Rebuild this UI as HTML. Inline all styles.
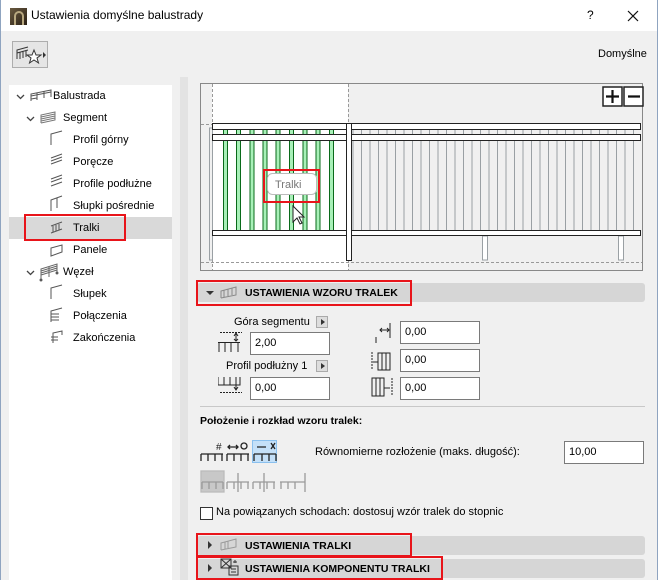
<!DOCTYPE html>
<html><head><meta charset="utf-8"><style>
*{box-sizing:border-box;margin:0;padding:0}
body{width:658px;height:580px;overflow:hidden;background:#f0f0f0;font-family:"Liberation Sans","DejaVu Sans",sans-serif;font-size:11px;color:#000;position:relative}
.a{position:absolute}
.t{position:absolute;white-space:nowrap;font-size:11px}
.inp{position:absolute;background:#fff;border:1px solid #7a7a7a;height:23px;padding:4px 0 0 4px;font-size:11px}
.bar{position:absolute;left:197px;width:448px;height:19px;background:#d6d6d6;border-radius:3px}
.bar b{position:absolute;left:48px;top:4px;font-size:10.5px}
.red{position:absolute;border:2px solid #e8141a}
.tri{position:absolute;width:0;height:0}
.ab{position:absolute;width:12px;height:12px;background:#ddd;border:1px solid #aaa}
.ab:after{content:"";position:absolute;left:4px;top:2px;border-left:4px solid #333;border-top:3.5px solid transparent;border-bottom:3.5px solid transparent}
</style></head><body>
<!-- title bar -->
<div class="a" style="left:0;top:0;width:658px;height:31px;background:#fff"></div>
<div class="a" style="left:10px;top:8px;width:17px;height:17px;background:linear-gradient(135deg,#6a5a40,#2a2015)"></div>
<div class="a" style="left:14px;top:11px;width:10px;height:14px;border:2px solid #b8a880;border-bottom:none;border-radius:8px 8px 0 0"></div>
<div class="t" style="left:31px;top:8px;font-size:12px">Ustawienia domyślne balustrady</div>
<div class="t" style="left:587px;top:8px;font-size:12px">?</div>
<svg class="a" style="left:627px;top:10px" width="12" height="12" stroke="#111" stroke-width="1.2"><path d="M1 1L11 11M11 1L1 11"/></svg>
<div class="a" style="left:0;top:0;width:1px;height:580px;background:#8fa4c0"></div>
<div class="a" style="right:0;top:0;width:1px;height:580px;background:#8fa4c0"></div>
<!-- toolbar -->
<div class="a" style="left:12px;top:41px;width:36px;height:27px;border:1px solid #adadad;background:#e5e5e5"></div>
<svg class="a" style="left:15px;top:44px" width="32" height="22" fill="none" stroke="#333">
<path d="M2 15V6L13 3M2 9L13 6M5 8V15M8 7V14M11 6V13"/>
<path d="M19 6L21 11H26L22 14L23.5 19L19 16L14.5 19L16 14L12 11H17Z" fill="#fff"/>
<path d="M28 8L31 11L28 14Z" fill="#333" stroke="none"/>
</svg>
<div class="t" style="left:598px;top:48px;font-size:11px">Domyślne</div>
<!-- tree -->
<div class="a" style="left:9px;top:85px;width:163px;height:495px;background:#fff"></div>
<div class="a" style="left:180px;top:77px;width:8px;height:503px;background:#e3e3e3"></div>
<div class="a" style="left:9px;top:217px;width:163px;height:22px;background:#d9d9d9"></div>
<div class="red" style="left:24px;top:214px;width:102px;height:27px"></div>
<svg class="a" style="left:14px;top:88px" width="40" height="190" fill="none" stroke="#444" stroke-width="1.3">
<path d="M3 7L6.5 10.5L10 7"/><path d="M13 29L16.5 32.5L20 29"/><path d="M13 183L16.5 186.5L20 183"/>
</svg>
<svg class="a" style="left:30px;top:88px" width="25" height="16" fill="none" stroke="#555"><path d="M1 13V6L21 2V9M1 8L21 4M7 12V5M14 10V3M7 10L1 11M14 9"/></svg>
<svg class="a" style="left:40px;top:110px" width="18" height="16" fill="none" stroke="#777"><path d="M1 13V5L15 2V10L1 13M1 7L15 4M1 9L15 6M1 11L15 8"/></svg>
<svg class="a" style="left:38px;top:262px" width="22" height="20" fill="none" stroke="#666"><path d="M3 18V7L19 2V10M3 9L19 4M3 11L19 6M3 13L19 8M11 5V15"/><circle cx="3" cy="18" r="1" fill="#222"/><circle cx="19" cy="11" r="1" fill="#222"/></svg>
<div class="t" style="left:53px;top:90px">Balustrada</div>
<div class="t" style="left:63px;top:112px">Segment</div>
<div class="t" style="left:73px;top:134px">Profil górny</div>
<div class="t" style="left:73px;top:156px">Poręcze</div>
<div class="t" style="left:73px;top:178px">Profile podłużne</div>
<div class="t" style="left:73px;top:200px">Słupki pośrednie</div>
<div class="t" style="left:73px;top:222px">Tralki</div>
<div class="t" style="left:73px;top:244px">Panele</div>
<div class="t" style="left:63px;top:266px">Węzeł</div>
<div class="t" style="left:73px;top:288px">Słupek</div>
<div class="t" style="left:73px;top:310px">Połączenia</div>
<div class="t" style="left:73px;top:332px">Zakończenia</div>
<svg class="a" style="left:40px;top:130px" width="30" height="220" fill="none" stroke="#555" stroke-width="1">
<path d="M11 15V4L22 1"/>
<path d="M11 34L22 30M11 31L22 27M11 28L22 24"/>
<path d="M11 56L22 52M11 52L22 48M11 49L22 45"/>
<path d="M11 81V70L22 66M17 78V68"/>
<path d="M11 103L22 99M11 96L22 92M13 102V96M16 101V95M19 100V94"/>
<path d="M11 126V118L22 115V122Z"/>
<path d="M11 169V158L22 155"/>
<path d="M11 192V181L22 178M11 184H19M11 187H19M11 190H19"/>
<path d="M13 213V203L22 201V205M11 207H18M11 210H18"/>
</svg>
<!-- preview -->
<svg class="a" style="left:200px;top:83px" width="444" height="189">
<rect x="0.5" y="0.5" width="442" height="187" fill="#f0f0f0" stroke="#888"/>
<rect x="12" y="1" width="136" height="186" fill="#fff"/>
<g stroke="#999" stroke-dasharray="3 2"><path d="M12.5 1V187M148.5 1V187M1 179.5H442M1 41.5H12"/></g>
<rect x="403" y="4" width="19" height="19" fill="#fff" stroke="#222" stroke-width="1.5"/>
<rect x="424" y="4" width="19" height="19" fill="#fff" stroke="#222" stroke-width="1.5"/>
<path d="M412.5 7V20M406 13.5H419M428 13.5H440" stroke="#111" stroke-width="2.2"/>
<g fill="none" stroke="#9aa0a4">
<path d="M153 46V148M161.5 46V148M170 46V148M178.5 46V148M187 46V148M195.5 46V148M204 46V148M212.5 46V148M221 46V148M229.5 46V148M238 46V148M246.5 46V148M255 46V148M263.5 46V148M272 46V148M280.5 46V148M289 46V148M297.5 46V148M306 46V148M314.5 46V148M323 46V148M331.5 46V148M340 46V148M348.5 46V148M357 46V148M365.5 46V148M374 46V148M382.5 46V148M391 46V148M399.5 46V148M408 46V148M416.5 46V148M425 46V148M433.5 46V148"/>
<rect x="282.5" y="153" width="5" height="24" fill="#fff"/><rect x="418.5" y="153" width="5" height="24" fill="#fff"/><rect x="9.5" y="45" width="3" height="132"/>
</g>
<g fill="#a8f0b8" stroke="#0a6a1a" stroke-width="1">
<rect x="23.5" y="46" width="4" height="102"/><rect x="36.5" y="46" width="4" height="102"/><rect x="50" y="46" width="4" height="102"/><rect x="63" y="46" width="4" height="102"/><rect x="76" y="46" width="4" height="102"/><rect x="89.5" y="46" width="4" height="102"/><rect x="103" y="46" width="4" height="102"/><rect x="116" y="46" width="4" height="102"/><rect x="129.5" y="46" width="4" height="102"/>
</g>
<g fill="#fff" stroke="#222">
<rect x="12.5" y="40.5" width="428" height="6"/><rect x="12.5" y="51.5" width="428" height="6"/><rect x="12.5" y="147.5" width="428" height="5"/><rect x="146.5" y="40.5" width="5" height="137"/>
</g>
<rect x="67.5" y="90.5" width="49" height="21" rx="5" fill="#fff" stroke="#bbb"/>
<text x="75" y="105" font-family="Liberation Sans" font-size="11" fill="#777">Tralki</text>
<path d="M93 123L93 139L97 135L100 141L102 140L99 134L104 134Z" fill="#fff" stroke="#222"/>
</svg>
<div class="red" style="left:263px;top:169px;width:57px;height:34px"></div>
<!-- section 1 -->
<div class="bar" style="top:283px"><b>USTAWIENIA WZORU TRALEK</b></div>
<div class="tri" style="left:206px;top:291px;border-top:4px solid #333;border-left:4px solid transparent;border-right:4px solid transparent"></div>
<svg class="a" style="left:220px;top:285px" width="18" height="15" fill="none" stroke="#888"><path d="M1 13V6L16 2V10L1 13M4 12V5M8 11V4M12 10V3"/></svg>
<div class="red" style="left:196px;top:280px;width:216px;height:26px"></div>
<div class="t" style="left:234px;top:316px">Góra segmentu</div>
<div class="ab" style="left:316px;top:316px"></div>
<div class="inp" style="left:250px;top:332px;width:80px">2,00</div>
<div class="t" style="left:226px;top:360px">Profil podłużny 1</div>
<div class="ab" style="left:316px;top:360px"></div>
<div class="inp" style="left:250px;top:377px;width:80px">0,00</div>
<svg class="a" style="left:218px;top:330px" width="30" height="70" fill="none" stroke="#222">
<path d="M2 2.5H24" stroke-dasharray="2 1"/><path d="M0 12.5H22M1 12V22M7 12V22M13 12V22M20 12V22M18 4V11M16 6L18 3L20 6M16 9L18 11L20 9"/>
<path d="M0 47V55H22V47M6 47V55M12 47V55M18 47V55M18 55V60M16 57L18 60L20 57"/><path d="M2 62.5H24" stroke-dasharray="2 1"/>
</svg>
<svg class="a" style="left:370px;top:320px" width="26" height="82" fill="none" stroke="#222">
<path d="M20 3V18M10 10H19M12 8L10 10L12 12M17 8L19 10L17 12M6 17V23"/>
<path d="M2 32V50" stroke-dasharray="2 1"/><path d="M8 33H20V50H8ZM12 33V50M16 33V50M3 42H8"/>
<path d="M2 58H14V76H2ZM6 58V76M10 58V76M14 68H20"/><path d="M22 58V76" stroke-dasharray="2 1"/>
</svg>
<div class="inp" style="left:400px;top:321px;width:80px">0,00</div>
<div class="inp" style="left:400px;top:349px;width:80px">0,00</div>
<div class="inp" style="left:400px;top:377px;width:80px">0,00</div>
<div class="a" style="left:200px;top:406px;width:445px;height:1px;background:#c8c8c8"></div>
<div class="t" style="left:200px;top:415px;font-weight:bold;font-size:10.5px">Położenie i rozkład wzoru tralek:</div>
<div class="a" style="left:252px;top:440px;width:25px;height:23px;background:#c4e0f8;border:1px solid #8ac0ee"></div>
<svg class="a" style="left:200px;top:440px" width="112" height="56" fill="none" stroke="#222" stroke-width="1.3">
<path d="M1 14H23M1 14V21M8 14V21M15 14V21M22 14V21M27 14H49M27 14V21M34 14V21M41 14V21M48 14V21M54 14H76M54 14V21M62 14V21M69 14V21M76 14V21"/>
<text x="16" y="10" font-size="10" fill="#222" stroke="none" font-family="Liberation Sans">#</text>
<path d="M28 7H38M30 5L28 7L30 9M36 5L38 7L36 9M57 7H66M71 3L75 9M75 3L71 9"/>
<circle cx="44" cy="6" r="3"/>
</svg>
<svg class="a" style="left:200px;top:470px" width="112" height="24" fill="none" stroke="#9a9a9a" stroke-width="1.3">
<rect x="1" y="1" width="23" height="21" fill="#c8c8c8" stroke="#bbb"/>
<path d="M2 12H23M2 12V19M9 12V19M16 12V19M23 12V19M27 12H49M27 12V19M34 12V19M41 12V19M48 12V19M53 12H75M53 12V19M60 12V19M67 12V19M74 12V19M80 12H105M81 12V19M88 12V19M95 12V19M38 3V22M64 3V22M105 3V22"/>
</svg>
<div class="t" style="left:315px;top:446px">Równomierne rozłożenie (maks. długość):</div>
<div class="inp" style="left:564px;top:441px;width:80px">10,00</div>
<div class="a" style="left:200px;top:507px;width:13px;height:13px;background:#fff;border:1px solid #333"></div>
<div class="t" style="left:216px;top:506px">Na powiązanych schodach: dostosuj wzór tralek do stopnic</div>
<!-- sections 2,3 -->
<div class="bar" style="top:536px"><b>USTAWIENIA TRALKI</b></div>
<div class="tri" style="left:208px;top:541px;border-left:4px solid #333;border-top:4px solid transparent;border-bottom:4px solid transparent"></div>
<svg class="a" style="left:220px;top:537px" width="18" height="15" fill="none" stroke="#999"><path d="M1 13V6L16 2V10L1 13M5 12V5M8 11V4"/></svg>
<div class="red" style="left:196px;top:533px;width:216px;height:24px"></div>
<div class="bar" style="top:559px"><b>USTAWIENIA KOMPONENTU TRALKI</b></div>
<div class="tri" style="left:208px;top:564px;border-left:4px solid #333;border-top:4px solid transparent;border-bottom:4px solid transparent"></div>
<svg class="a" style="left:220px;top:558px" width="20" height="18" fill="none" stroke="#333"><rect x="1" y="1" width="10" height="9"/><path d="M1 1L11 10M11 1L1 10M9 8H18V17H9ZM11 11H16M11 14H16M15 2V5M13 4H17"/></svg>
<div class="red" style="left:196px;top:556px;width:247px;height:24px"></div>
</body></html>
